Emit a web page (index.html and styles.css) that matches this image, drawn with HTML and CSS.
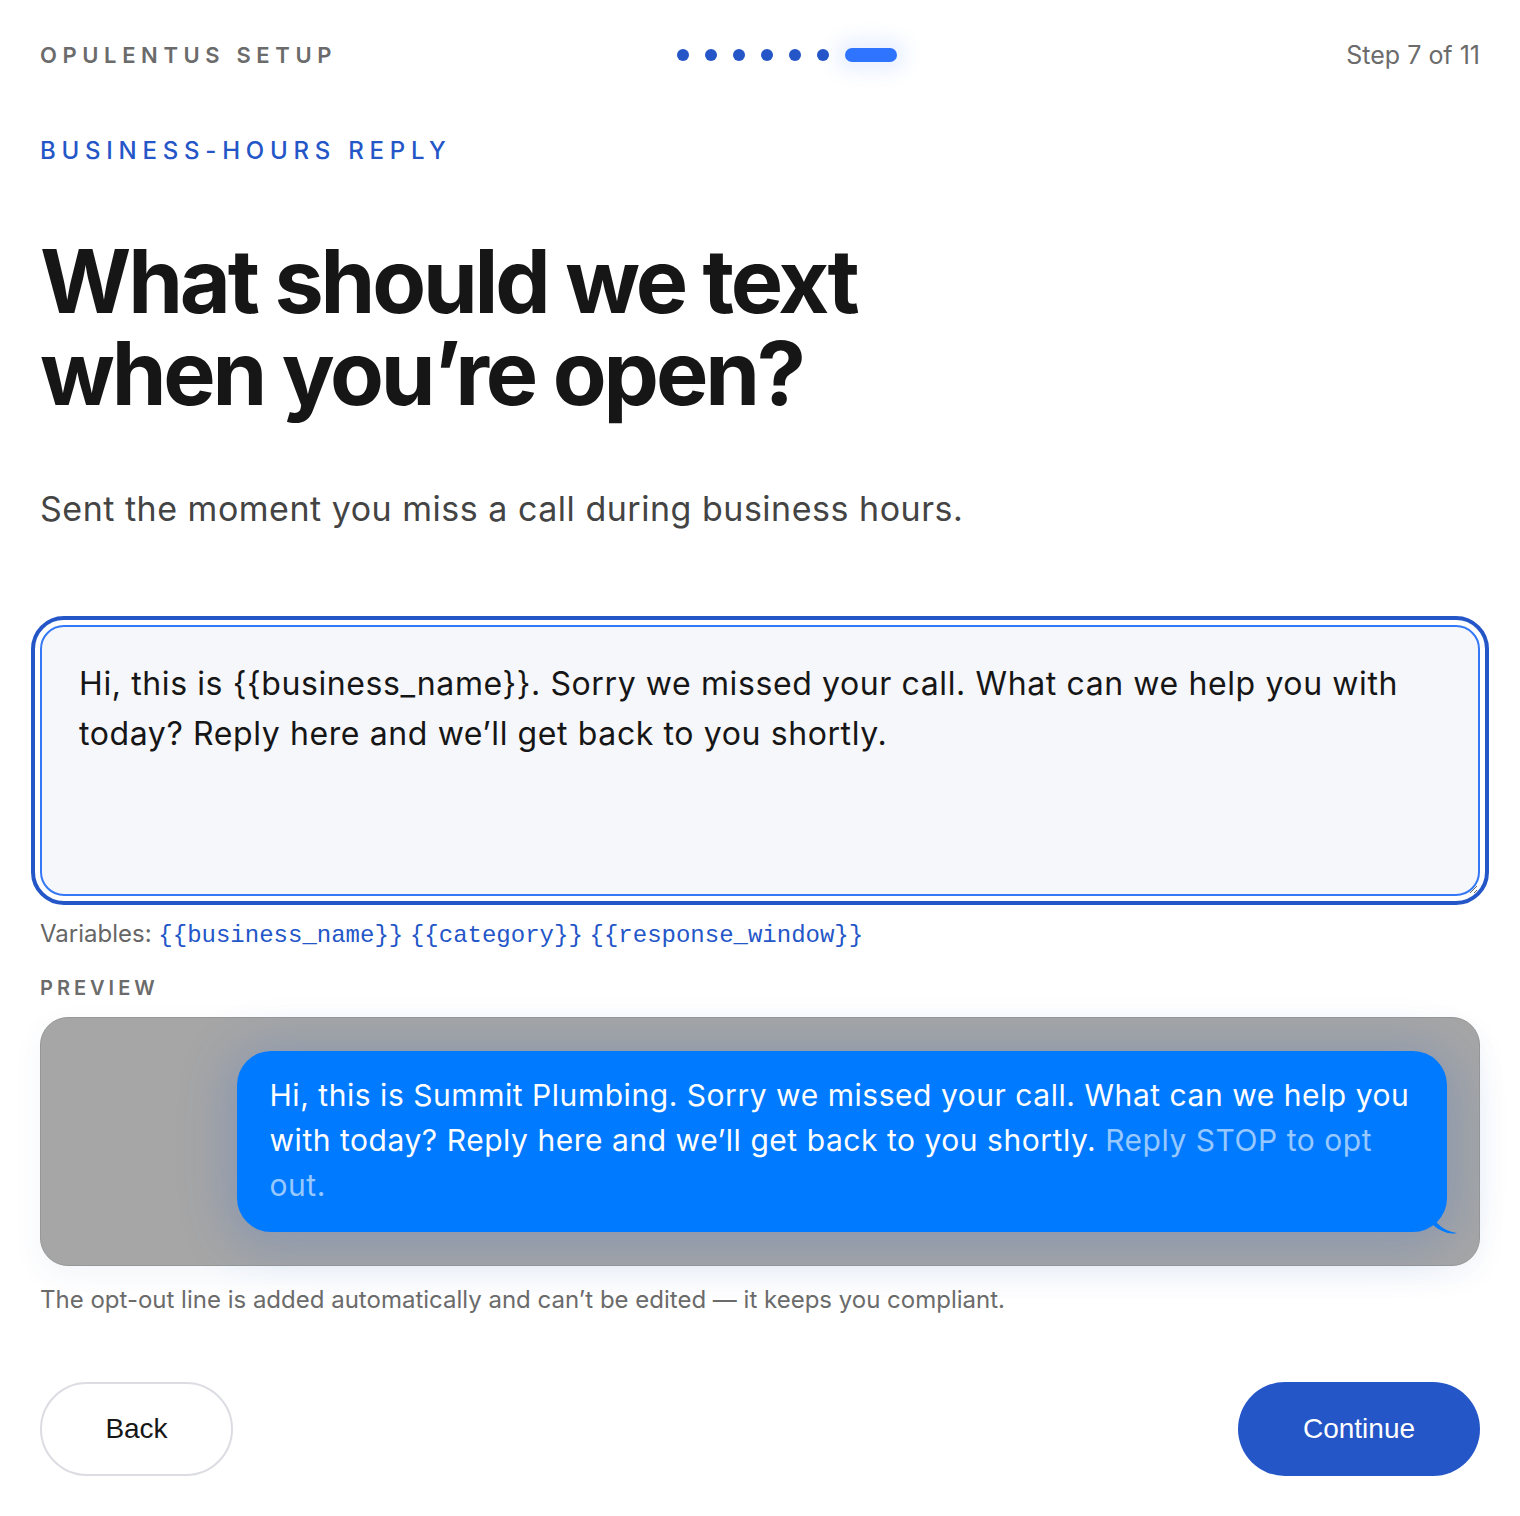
FILE: index.html
```html
<!DOCTYPE html>
<html lang="en">
<head>
<meta charset="utf-8">
<title>Opulentus Setup</title>
<link rel="stylesheet" href="styles.css">
</head>
<body>
<main class="page">
  <header class="topbar">
    <div class="brand">OPULENTUS SETUP</div>
    <div class="steps">
      <span class="dot"></span><span class="dot"></span><span class="dot"></span><span class="dot"></span><span class="dot"></span><span class="dot"></span><span class="pill"></span>
    </div>
    <div class="stepcount">Step 7 of 11</div>
  </header>

  <div class="eyebrow">BUSINESS-HOURS REPLY</div>
  <h1 class="title">What should we text<br>when you’re open?</h1>
  <p class="subtitle">Sent the moment you miss a call during business hours.</p>

  <textarea class="editor">Hi, this is {{business_name}}. Sorry we missed your call. What can we help you with today? Reply here and we’ll get back to you shortly.</textarea>

  <div class="vars">Variables: <code>{{business_name}}</code> <code>{{category}}</code> <code>{{response_window}}</code></div>

  <div class="label">PREVIEW</div>
  <div class="preview">
    <div class="bubble">Hi, this is Summit Plumbing. Sorry we missed your call. What can we help you with today? Reply here and we’ll get back to you shortly. <span class="optout">Reply STOP to opt out.</span>
      <svg class="tail" width="26" height="20" viewBox="0 0 26 20"><path d="M0 0 C2 8 10 16 24 18 C16 20 7 16 0 10 Z" fill="#007aff"/></svg>
    </div>
  </div>
  <p class="note">The opt-out line is added automatically and can’t be edited — it keeps you compliant.</p>

  <div class="actions">
    <button class="btn back">Back</button>
    <button class="btn next">Continue</button>
  </div>
</main>
</body>
</html>
```
FILE: styles.css
```css
* { box-sizing: border-box; }
html, body { margin: 0; background: #fff; }
body { font-family: Inter, "Noto Sans", sans-serif; color: #161616; }
.page { padding: 40px 40px 0 40px; display: flex; flex-direction: column; }

.topbar { height: 30px; display: flex; align-items: center; justify-content: space-between; position: relative; }
.brand { font-size: 22px; font-weight: 600; letter-spacing: 0.255em; color: #6b6b6b; }
.steps { position: absolute; left: 637px; top: 8px; display: flex; align-items: center; gap: 16px; }
.dot { width: 12px; height: 12px; border-radius: 50%; background: #2456c8; }
.pill { width: 52px; height: 14px; border-radius: 7px; background: #2f74ff; box-shadow: 0 0 18px 10px rgba(47,116,255,0.10); }
.stepcount { font-size: 25px; color: #6b6b6b; }

.eyebrow { margin-top: 66px; font-size: 24px; line-height: 30px; letter-spacing: 0.24em; color: #2456c8; font-weight: 500; }
.title { margin: 69px 0 0; font-size: 88px; line-height: 92px; font-weight: 700; letter-spacing: -0.036em; color: #161616; }
.subtitle { margin: 68px 0 0; font-size: 34px; line-height: 44px; color: #444; letter-spacing: 0.015em; }

.editor { margin-top: 94px; width: 100%; height: 271px; padding: 32px 37px 31px; border: 2px solid #3478f6; border-radius: 24px; background: #f6f7fb; font-family: Inter, "Noto Sans", sans-serif; font-size: 32px; line-height: 50px; letter-spacing: 0.019em; color: #161616; outline: 4px solid #2456c8; outline-offset: 5px; resize: vertical; display: block; }

.vars { margin-top: 23px; font-size: 24px; line-height: 30px; color: #666; }
.vars code { font-family: "Liberation Mono", monospace; font-size: 24px; color: #2456c8; }

.label { margin-top: 24px; font-size: 20px; line-height: 26px; font-weight: 600; letter-spacing: 0.2em; color: #6b6b6b; }

.preview { margin-top: 16px; background: #a6a6a6; border: 1px solid #979797; border-radius: 28px; padding: 33px 32px 33px; display: flex; justify-content: flex-end; box-shadow: 0 10px 30px rgba(40,80,160,0.06); }
.bubble { position: relative; width: 88.1%; background: #007aff; color: #fff; border-radius: 34px; padding: 22px 28px 24px 33px; font-size: 30px; line-height: 45px; letter-spacing: 0.018em; box-shadow: 0 6px 50px 10px rgba(40,100,210,0.22); }
.optout { color: rgba(255,255,255,0.6); }
.tail { position: absolute; right: -12px; bottom: -3px; }

.note { margin: 19px 0 0; font-size: 24px; line-height: 30px; color: #6b6b6b; }

.actions { margin-top: 67px; display: flex; justify-content: space-between; }
.btn { height: 94px; border-radius: 47px; font-family: "Liberation Sans", Arial, sans-serif; font-size: 28px; cursor: pointer; }
.back { width: 193px; background: #fff; border: 2px solid #dcdde3; color: #161616; }
.next { width: 242px; background: #2456c8; border: none; color: #fff; }
```
